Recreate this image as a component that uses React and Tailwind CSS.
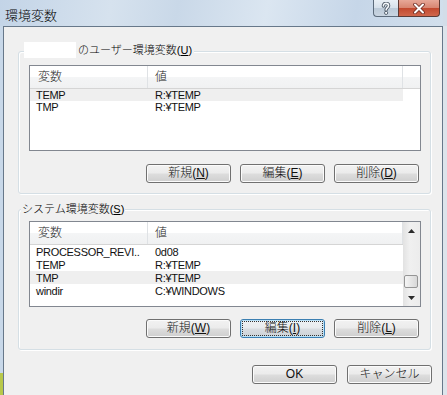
function HelpGlyph() {
  return (
    <svg width="12" height="13" viewBox="0 0 12 13">
      <g fill="none" strokeLinecap="round" strokeLinejoin="round">
        <path d="M3.4 4 C3.4 2.2 4.6 1.4 6 1.4 C7.6 1.4 8.6 2.4 8.6 3.7 C8.6 5.4 6.1 5.8 6.1 8" stroke="#4b5866" strokeWidth="3.4" />
        <path d="M3.4 4 C3.4 2.2 4.6 1.4 6 1.4 C7.6 1.4 8.6 2.4 8.6 3.7 C8.6 5.4 6.1 5.8 6.1 8" stroke="#f4f7fa" strokeWidth="1.6" />
      </g>
      <circle cx="6.1" cy="10.9" r="1.6" fill="#f4f7fa" stroke="#4b5866" strokeWidth="0.9" />
    </svg>
  );
}

function CloseGlyph() {
  return (
    <svg width="14" height="11" viewBox="0 0 14 11">
      <path d="M3 1.5 L11 9.5 M11 1.5 L3 9.5" stroke="#6b2a20" strokeWidth="3.6" strokeLinecap="round" />
      <path d="M3 1.5 L11 9.5 M11 1.5 L3 9.5" stroke="#ffffff" strokeWidth="2" strokeLinecap="round" />
    </svg>
  );
}

function Arrow({ up }) {
  return (
    <svg width="7" height="4" viewBox="0 0 7 4">
      {up ? <path d="M0 4 L3.5 0 L7 4 Z" fill="#2b2b2b" /> : <path d="M0 0 L3.5 4 L7 0 Z" fill="#2b2b2b" />}
    </svg>
  );
}

function Btn({ children, focus }) {
  if (focus) {
    return (
      <div className="w-[85px] h-[19px] rounded-[3px] border border-[#3c7fb1] p-[1px] shadow-[inset_0_0_0_1px_#b9e1f8] bg-[linear-gradient(#eef1f3_0%,#e8ebee_48%,#d9dde1_52%,#cdd2d7_100%)]">
        <div className="w-full h-full border border-dotted border-[#333] flex items-center justify-center text-[12px] leading-[13px] text-[#111]">
          {children}
        </div>
      </div>
    );
  }
  return (
    <div className="w-[85px] h-[19px] rounded-[3px] border border-[#707070] shadow-[inset_0_0_0_1px_#fbfbfb] bg-[linear-gradient(#f2f2f2_0%,#ebebeb_48%,#dddddd_52%,#cfcfcf_100%)] flex items-center justify-center text-[12px] leading-[13px] text-[#111]">
      {children}
    </div>
  );
}

function Acc({ k }) {
  return <span className="underline underline-offset-[1px]">{k}</span>;
}

function ScrollBar() {
  return (
    <div className="w-[17px] flex flex-col bg-[linear-gradient(to_right,#e2e2e2,#f0f0f0_40%,#ececec)]">
      <div className="h-[17px] flex items-center justify-center">
        <Arrow up />
      </div>
      <div className="flex-1 flex flex-col">
        <div className="mt-auto mb-[1px] ml-[1px] w-[14px] h-[13px] rounded-[2px] border border-[#959595] bg-[linear-gradient(to_right,#f5f5f5,#e6e6e6_50%,#d8d8d8)]" />
      </div>
      <div className="h-[17px] flex items-center justify-center">
        <Arrow />
      </div>
    </div>
  );
}

function ListView({ rows, rowH, hl, scroll }) {
  return (
    <div className="ml-[10px] w-[392px] h-[86px] border border-[#828790] bg-white flex">
      <div className="flex-1 flex flex-col">
        <div className="h-[23px] flex border-b border-[#d5d5d5] bg-[linear-gradient(#ffffff_0%,#ffffff_50%,#f4f5f6_50%,#f0f1f2_100%)] text-[12px] leading-[14px] text-[#222]">
          <div className="w-[118px] border-r border-[#dfe2e5] pl-[8px] flex items-center">変数</div>
          <div className="w-[255px] border-r border-[#dfe2e5] pl-[7px] flex items-center">値</div>
          <div className="flex-1" />
        </div>
        {rows.map((r, i) => (
          <div key={r[0]} className={`w-[373px] flex items-center text-[11px] leading-[12px] tracking-[-0.3px] text-[#111] ${rowH === 13 ? "h-[13px]" : "h-[12px]"} ${i === hl ? "bg-[#efefef]" : ""}`}>
            <div className="w-[118px] pl-[6px]">{r[0]}</div>
            <div className="pl-[7px]">{r[1]}</div>
          </div>
        ))}
      </div>
      {scroll && <ScrollBar />}
    </div>
  );
}

export default function App() {
  return (
    <div className="w-[447px] h-[395px] overflow-hidden flex flex-col bg-[#d3dde8] font-light font-['Liberation_Sans','Noto_Sans_CJK_JP',sans-serif]">
      {/* title bar */}
      <div className="w-[443px] h-[26px] flex items-start bg-[linear-gradient(100deg,#c3d4e7_0%,#d6e2ee_25%,#c9d8e8_40%,#dbe6f1_60%,#c6d6e8_80%,#d2dfec_100%)]">
        <div className="pl-[5px] pt-[9px] text-[13px] leading-[14px] text-black">環境変数</div>
        <div className="ml-auto mr-[3px] flex">
          <div className="w-[25px] h-[17px] border border-t-0 border-r-0 border-[#5c6b7b] rounded-bl-[4px] bg-[linear-gradient(#e9eff5_0%,#d6e0ea_50%,#bccad8_52%,#c9d5e1_100%)] flex items-center justify-center">
            <HelpGlyph />
          </div>
          <div className="w-[42px] h-[17px] border border-t-0 border-[#5c3a35] rounded-br-[4px] bg-[linear-gradient(#e7a898_0%,#d88672_48%,#c2492f_52%,#d0674c_100%)] flex items-center justify-center">
            <CloseGlyph />
          </div>
        </div>
      </div>

      <div className="flex-1 flex">
        {/* left frame */}
        <div className="w-[3px] flex flex-col bg-[#c8d8e9]">
          <div className="mt-auto h-[22px] bg-[#b8c84a]" />
        </div>

        {/* client area */}
        <div className="w-[440px] border-l border-r border-t border-[#67788a] bg-[#f0f0f0] pl-[14px] pr-[10px] flex flex-col">
          {/* user vars */}
          <div className="mt-[24px] w-[413px] border border-[#d5dfe5] rounded-[3px] shadow-[inset_1px_1px_0_#ffffff,1px_1px_0_#ffffff] pb-[10px] flex flex-col">
            <div className="-mt-[10px] ml-[5px] h-[16px] w-fit pr-[2px] flex items-center gap-[2px] bg-[#f0f0f0]">
              <div className="w-[52px] h-[16px] bg-white" />
              <span className="text-[11px] leading-[13px] text-black">
                のユーザー環境変数(<Acc k="U" />)
              </span>
            </div>
            <div className="mt-[7px]">
              <ListView rows={[["TEMP", "R:¥TEMP"], ["TMP", "R:¥TEMP"]]} rowH={12} hl={0} />
            </div>
            <div className="mt-[13px] pr-[11px] flex justify-end gap-[9px]">
              <Btn>新規(<Acc k="N" />)</Btn>
              <Btn>編集(<Acc k="E" />)</Btn>
              <Btn>削除(<Acc k="D" />)</Btn>
            </div>
          </div>

          {/* system vars */}
          <div className="mt-[15px] w-[413px] border border-[#d5dfe5] rounded-[3px] shadow-[inset_1px_1px_0_#ffffff,1px_1px_0_#ffffff] pb-[11px] flex flex-col">
            <div className="-mt-[9px] ml-[2px] h-[16px] w-fit px-[1px] flex items-center bg-[#f0f0f0]">
              <span className="text-[11px] leading-[13px] text-black">
                システム環境変数(<Acc k="S" />)
              </span>
            </div>
            <div className="mt-[4px]">
              <ListView
                rows={[
                  ["PROCESSOR_REVI..", "0d08"],
                  ["TEMP", "R:¥TEMP"],
                  ["TMP", "R:¥TEMP"],
                  ["windir", "C:¥WINDOWS"],
                ]}
                rowH={13}
                hl={2}
                scroll
              />
            </div>
            <div className="mt-[12px] pr-[11px] flex justify-end gap-[9px]">
              <Btn>新規(<Acc k="W" />)</Btn>
              <Btn focus>編集(<Acc k="I" />)</Btn>
              <Btn>削除(<Acc k="L" />)</Btn>
            </div>
          </div>

          <div className="mt-[15px] flex justify-end gap-[10px]">
            <Btn>OK</Btn>
            <Btn>キャンセル</Btn>
          </div>
        </div>

        {/* desktop behind */}
        <div className="flex-1 bg-[#dde4eb]" />
      </div>
    </div>
  );
}
